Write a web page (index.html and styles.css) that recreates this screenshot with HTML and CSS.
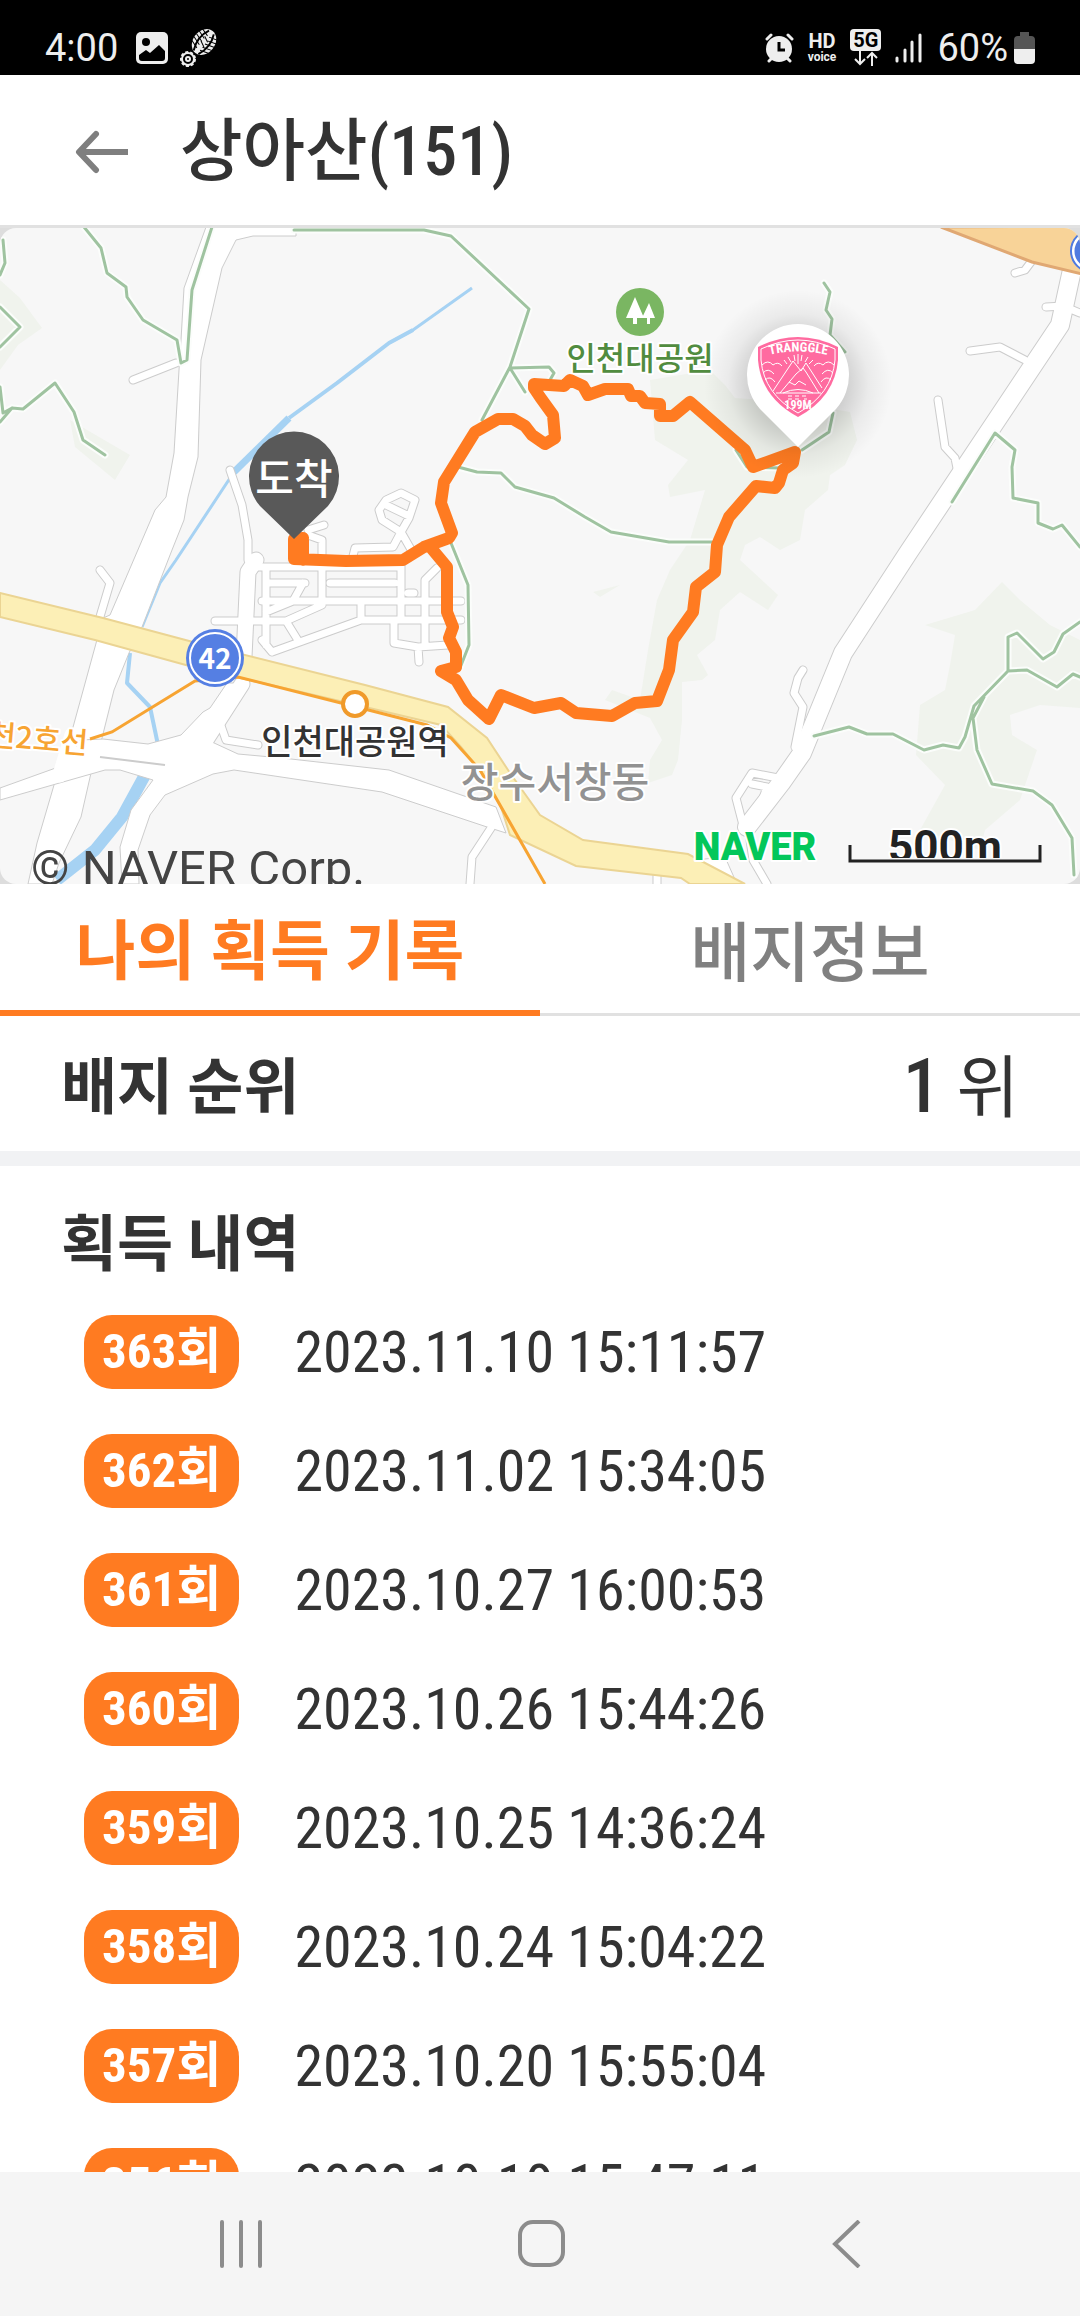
FILE: index.html
```
<!DOCTYPE html>
<html lang="ko">

<head>
    <meta charset="UTF-8">
    <meta name="viewport" content="width=device-width, initial-scale=1.0">
    <title>상아산(151)</title>
    <link rel="stylesheet" href="styles.css">
</head>

<body>
    <div class="app">
        <div class="status-bar">
            <span class="clock">4:00</span>
            <svg class="icon-photo" width="32" height="32" viewBox="0 0 32 32">
                <rect width="32" height="32" rx="5" fill="#eee" />
                <circle cx="10" cy="10" r="4" fill="#000" />
                <path d="M3 26V23L10 18L14 21L23 13L29 19V26Q29 29 26 29H6Q3 29 3 26Z" fill="#000" />
            </svg>
            <svg class="icon-shoe" width="38" height="38" viewBox="0 0 38 38">
                <g transform="rotate(38 24 13)">
                    <ellipse cx="24" cy="13" rx="11" ry="14" fill="#eee" />
                    <path d="M13 3L23 6M13 7L22 10M13 11L22 14M13 15L22 18M13 19L22 22M35 3L25 6M35 7L26 10M35 11L26 14M35 15L26 18M35 19L26 22" stroke="#000" stroke-width="1" />
                    <path d="M21 1C17 9 17 17 21 26M27 1C31 9 31 17 27 26" fill="none" stroke="#000" stroke-width="2" />
                    <path d="M21 8L27 11M21 14L27 17" stroke="#000" stroke-width="1" />
                </g>
                <circle cx="8" cy="30" r="6" fill="none" stroke="#eee" stroke-width="2" />
                <circle cx="8" cy="30" r="7" fill="none" stroke="#eee" stroke-width="2" stroke-dasharray="3 2" />
                <circle cx="8" cy="30" r="2" fill="none" stroke="#eee" stroke-width="2" />
            </svg>

            <div class="status-right">
                <svg width="29" height="30" viewBox="0 0 29 30">
                    <circle cx="14" cy="16" r="13" fill="#eee" />
                    <path d="M2 6L6 2M27 6L23 2M4 28L7 25M25 28L22 25" stroke="#eee" stroke-width="3" stroke-linecap="round" />
                    <path d="M14 9V17H20" fill="none" stroke="#000" stroke-width="3" />
                </svg>
                <span class="hd"><b>HD</b><small>voice</small></span>
                <span class="network">
                    <b>5G</b>
                    <svg width="24" height="15" viewBox="0 0 24 15">
                        <path d="M6 0V13M1 8L6 13L11 8M18 15V2M13 7L18 2L23 7" fill="none" stroke="#eee" stroke-width="2" />
                    </svg>
                </span>
                <svg class="icon-signal" width="28" height="30" viewBox="0 0 28 30">
                    <path d="M2 25V28M10 17V28M17 9V28M25 2V28" stroke="#eee" stroke-width="3" stroke-linecap="round" />
                </svg>
                <span class="battery-text">60%</span>
                <svg width="21" height="32" viewBox="0 0 21 32">
                    <path d="M6 0H15V4H17Q21 4 21 8V17H0V8Q0 4 4 4H6Z" fill="#555" />
                    <path d="M0 17H21V28Q21 32 17 32H4Q0 32 0 28Z" fill="#eee" />
                </svg>
            </div>
        </div>

        <header class="header">
            <button class="back-btn" type="button" aria-label="뒤로">
                <svg width="54" height="44" viewBox="0 0 54 44">
                    <path d="M53 22H5" fill="none" stroke="#7f7f7f" stroke-width="6" />
                    <path d="M21 4L4 22L21 40" fill="none" stroke="#7f7f7f" stroke-width="6" stroke-linecap="round" stroke-linejoin="round" />
                </svg>
            </button>
            <h1 class="title">상아산(151)</h1>
        </header>

        <div class="map">
            <svg class="map-canvas" viewBox="0 228 1080 656" preserveAspectRatio="xMidYMid slice">
                <defs>
                    <radialGradient id="shade">
                        <stop offset="50%" stop-color="#000" stop-opacity="0.16" />
                        <stop offset="75%" stop-color="#000" stop-opacity="0.05" />
                        <stop offset="100%" stop-color="#000" stop-opacity="0" />
                    </radialGradient>
                    <path id="trails" d="M84 227L101 248L107 273L126 287L127 297L143 320L177 340L181 363L187 360L192 290L212 227
                        M294 230H424L451 236L529 309L510 367L482 420M510 368L549 367L554 373L550 380M510 368L525 392
                        M458 467L477 472L501 473L515 487L554 498L585 517L611 532L669 542H712
                        M3 240L5 263L0 275M0 307L20 327L0 347M0 387L3 413L12 408L23 409L55 383L74 412L83 440L105 455M0 422L12 408
                        M451 543L468 585L469 645L460 668
                        M824 283L830 292L826 310L832 319L830 335L845 352M833 413L829 432L802 450M736 450L747 467L781 468
                        M952 502L995 433L1015 450L1012 467L1013 498L1038 503V523L1053 529L1062 525L1080 547
                        M814 736L849 727L867 734H893L924 750L943 745L959 748L965 737L974 706L1008 671V637L1017 633L1043 659L1054 652L1063 634L1080 622
                        M1008 671L1027 670L1057 687L1073 674L1080 677M984 697L973 718L977 750L992 784L1033 791L1052 805L1072 838L1074 875" />
                    <path id="streets" d="M230 470L242 505L248 540V560M133 380L176 363M100 570L110 583L99 620
                        M256 567H400M266 583H305M262 601H461M266 567V645M322 560V601M401 560V620M215 621H286M303 583L293 601L266 612
                        M272 652L361 620H461M394 622V643L418 647L448 645M418 647L419 662M437 568L425 580V643M408 593H414
                        M286 621L299 642M262 640L272 652M286 621L322 605M361 620V605M330 583H395
                        M401 493L415 500L409 518L401 532L382 520L379 510L386 500ZM386 505L409 516M401 532L413 553M401 532L393 547L355 548L352 560
                        M308 530L324 525M308 535L322 540V556
                        M220 723L226 740L258 745M491 828L472 857L470 884
                        M803 670L798 678L794 693L803 707L795 747M778 778L752 773L736 798L743 825M752 784L767 787L763 798M743 825L778 785
                        M750 840L753 860L767 884M657 873V884
                        M1015 273L1025 270L1031 262M1046 307L1063 306L1080 313M970 351L1000 347L1025 360M938 400L945 447L955 458L958 473" />
                    <path id="avenue" d="M1072 270L1060 325L908 553L843 653L802 753L781 783L747 827" />
                    <path id="lane" d="M256 560L248 572L244 657M242 684L206 740" />
                </defs>

                <rect y="228" width="1080" height="656" fill="#f7f7f7" />

                <!-- forest -->
                <g fill="#f0f3ed">
                    <path d="M650 380L710 370L725 385L735 398L790 402L850 412L857 440L845 465L830 475L828 490L805 510L800 540L780 550L760 537L745 545L740 560L778 595L768 610L740 592L720 610L715 640L697 655L708 675L702 680L682 682V720L678 760L672 775L648 783L650 760L662 740L650 718L605 700L612 690L640 700L648 650L657 600L670 570L690 540L705 490L670 497L668 485L688 460L655 440Z" />
                    <path d="M1002 582L1020 600L1050 625L1080 640V708L1040 705L1010 715L1012 735L1037 750L1020 800L985 830L980 850L920 830L945 785L916 755L920 705L945 690L950 665L955 635L925 625L975 610Z" />
                    <path d="M0 280L20 298L42 328L18 345L0 370ZM70 420L130 455L115 480L75 447ZM593 592L620 585L600 597Z" />
                </g>

                <!-- water -->
                <g fill="none" stroke="#a6d2f3" stroke-linejoin="round">
                    <path d="M472 288L413 330L389 343" stroke-width="3" />
                    <path d="M413 330L389 343L337 383L289 418" stroke-width="4" />
                    <path d="M289 418L234 472" stroke-width="7" />
                    <path d="M234 472L176 560L160 583L142 627" stroke-width="3" />
                    <path d="M130 653L127 683L150 707L158 745" stroke-width="4" />
                    <path d="M145 775L122 817L95 850L57 880" stroke-width="12" />
                </g>

                <!-- roads -->
                <g class="casing">
                    <use href="#streets" class="street" />
                    <use href="#lane" class="lane" />
                    <use href="#avenue" class="avenue" />
                </g>
                <g fill="#fff" stroke="#ccc" stroke-width="1">
                    <path d="M206 227L184 288L181 340L179 370L174 453L166 497L155 510L110 615L103 618L95 647L64 760L59 768L37 843L28 884H52L59 863L81 817L91 773L102 738L114 690L129 653L142 627L172 550L184 520L188 497L198 457L201 360L222 268L236 240L253 236H296V227Z" />
                    <path d="M0 788L64 765L80 740L103 739L148 744L181 735L203 712L210 708L227 683H246L222 720L211 735L212 742L238 754L282 758L389 770L496 807L506 833L487 827L382 792L234 770L213 774L165 795L150 815L138 850L139 884H122L120 847L131 810L153 780L120 770H105L0 800Z" />
                    <path d="M695 860L725 857L737 884H735Z" />
                </g>
                <g class="surface">
                    <use href="#streets" class="street" />
                    <use href="#lane" class="lane" />
                    <use href="#avenue" class="avenue" />
                    <path d="M72 735L60 775" class="lane" />
                </g>
                <path d="M100 757L165 765" stroke="#ccc" stroke-width="2" />

                <!-- trails with a pale halo -->
                <use href="#trails" class="trail-halo" />
                <use href="#trails" class="trail" />

                <path d="M0 593L103 618L193 642L365 685L448 707L487 738L510 773L540 815L583 840L688 854L745 884H690L681 878L576 866L510 835L501 807L482 773L461 747L441 725L344 702L193 667L95 640L0 617Z" fill="#fcefb6" stroke="#ebd493" stroke-width="2" />
                <path d="M941 227L1032 262L1082 274V226Z" fill="#f8d398" stroke="#e0a873" stroke-width="3" />
                <circle cx="1092" cy="251" r="19" fill="#4f7be0" stroke="#fff" stroke-width="3" />
                <circle cx="1092" cy="251" r="21" fill="none" stroke="#4f7be0" stroke-width="2" />

                <!-- subway line 2 -->
                <path d="M90 739L112 732L195 681L238 677L341 703L427 725L451 738L480 770L545 884" fill="none" stroke="#f7a432" stroke-width="3" />
                <circle cx="355" cy="704" r="12" fill="#fff" stroke="#f09a2a" stroke-width="4" />

                <circle cx="215" cy="658" r="29" fill="#557fe3" />
                <circle cx="215" cy="658" r="25" fill="none" stroke="#fff" stroke-width="2" />
                <text class="map-road" x="215" y="669">42</text>

                <circle cx="640" cy="312" r="24" fill="#7ab662" />
                <path d="M635 297L644 318H637V324H633V318H626ZM649 303L655 318H650V324H647V318H642Z" fill="#fff" />

                <text class="map-park" x="640" y="370">인천대공원</text>
                <text class="map-station" x="355" y="754">인천대공원역</text>
                <text class="map-line" x="-13" y="754" transform="rotate(5 86 754)">천2호선</text>
                <text class="map-town" x="555" y="797">장수서창동</text>

                <!-- walked course -->
                <path class="course" d="M303 540V560M303 538L294 539V559L320 560L346 561L403 560L424 547L449 538L452 533L441 503L444 482L475 432L498 419H513L525 426L532 435L545 444L555 438L553 415L540 397L534 388V384L564 386L570 380L583 386L588 395L605 389H628L631 396H640L645 403L660 404V416H673L690 402L745 450L753 467L795 452L793 463L783 470L779 483L775 488L756 486L729 517L717 545L715 572L696 587L693 612L673 640L669 670L657 701L635 703L612 716L576 713L561 703L534 708L501 695L489 719L468 700L456 680L441 671L456 667V652L449 638L453 627L447 612V567L432 549" />

                <!-- arrival pin -->
                <path d="M294 539L260 506A45 45 0 1 1 328 506Z" fill="#595959" />
                <text class="map-arrival" x="294" y="494">도착</text>

                <!-- badge pin -->
                <circle cx="798" cy="384" r="94" fill="url(#shade)" />
                <path d="M798 447L760 409A51 51 0 1 1 836 409Z" fill="#fff" />
                <path d="M758 347Q778 337 798 337Q818 337 838 347V360Q835 397 798 417Q761 397 758 360Z" fill="#ff6ba0" />
                <g fill="none" stroke="#fff" stroke-width="1">
                    <path d="M761 349Q780 340 798 340Q816 340 835 349V360Q832 394 798 413Q764 394 761 360Z" />
                    <path d="M773 391L793 361L801 371M780 393L796 374L803 368L806 372L819 393M801 371L806 363L822 388M789 382L795 385L799 381L806 385M776 393H821M783 393Q798 386 813 393" />
                    <path d="M762 365Q768 359 773 365Q778 361 782 366M763 373Q768 367 774 374M765 380Q770 375 775 382M834 365Q828 359 823 365Q818 361 814 366M833 373Q828 367 822 374M831 380Q826 375 821 382" />
                    <path d="M798 354V364M794 355L795 361M802 355L801 361M788 357L791 362M808 357L805 362M784 360L787 364M813 360L809 364" />
                    <path d="M788 396H792M788 399H792M795 396H799M795 399H799M802 396H806M804 399H807" />
                </g>
                <path id="arc" d="M762 357Q798 346 835 357" fill="none" />
                <text class="badge-name"><textPath href="#arc" startOffset="50%">TRANGGLE</textPath></text>
                <text class="badge-height" x="798" y="409">199M</text>

                <!-- scale bar -->
                <text class="map-scale" x="945" y="862">500m</text>
                <rect x="850" y="858" width="191" height="26" fill="#f7f7f7" />
                <path d="M850 845V861H1040V845" fill="none" stroke="#222" stroke-width="3" />
                <text class="map-naver" x="755" y="860">NAVER</text>
                <text class="map-copyright" x="31" y="885">© NAVER Corp.</text>
            </svg>
        </div>

        <div class="tabs">
            <button class="tab active" type="button">나의 획득 기록</button>
            <button class="tab" type="button">배지정보</button>
        </div>

        <div class="rank">
            <h2>배지 순위</h2>
            <p class="rank-value"><b>1</b> 위</p>
        </div>

        <div class="history">
            <h2>획득 내역</h2>
            <ul class="history-list">
                <li><span class="count">363회</span><time>2023.11.10 15:11:57</time></li>
                <li><span class="count">362회</span><time>2023.11.02 15:34:05</time></li>
                <li><span class="count">361회</span><time>2023.10.27 16:00:53</time></li>
                <li><span class="count">360회</span><time>2023.10.26 15:44:26</time></li>
                <li><span class="count">359회</span><time>2023.10.25 14:36:24</time></li>
                <li><span class="count">358회</span><time>2023.10.24 15:04:22</time></li>
                <li><span class="count">357회</span><time>2023.10.20 15:55:04</time></li>
                <li><span class="count">356회</span><time>2023.10.19 15:47:11</time></li>
            </ul>
        </div>

        <nav class="nav-bar">
            <button type="button" aria-label="최근 앱">
                <svg width="48" height="48" viewBox="0 0 48 48">
                    <path d="M5 2V46M24 2V46M43 2V46" stroke="#8c8c8c" stroke-width="4" stroke-linecap="round" />
                </svg>
            </button>
            <button type="button" aria-label="홈">
                <svg width="48" height="48" viewBox="0 0 48 48">
                    <rect x="3" y="2" width="43" height="43" rx="13" fill="none" stroke="#8c8c8c" stroke-width="4" />
                </svg>
            </button>
            <button type="button" aria-label="뒤로">
                <svg width="48" height="48" viewBox="0 0 48 48">
                    <path d="M42 1L18 24L42 47" fill="none" stroke="#8c8c8c" stroke-width="4" />
                </svg>
            </button>
        </nav>
    </div>
</body>

</html>
```
FILE: styles.css
```
* {
    box-sizing: border-box;
}

body {
    margin: 0;
    font-family: "Roboto Condensed", "Noto Sans CJK KR", sans-serif;
    color: #333;
    background: #fff;
}

button {
    border: none;
    padding: 0;
    background: none;
    font-family: inherit;
    cursor: pointer;
}

svg {
    display: block;
}

h1,
h2,
p {
    margin: 0;
}

.app {
    display: flex;
    flex-direction: column;
    height: 100vh;
    overflow: hidden;
}

/* status bar */
.status-bar {
    display: flex;
    align-items: center;
    flex-shrink: 0;
    height: 75px;
    padding: 20px 45px 0;
    background: #000;
    color: #eee;
    font-family: Roboto, sans-serif;
    font-size: 38px;
}

.icon-photo {
    margin: 0 12px 0 18px;
}

.status-right {
    display: flex;
    align-items: center;
    gap: 14px;
    margin-left: auto;
}

.hd,
.network {
    display: flex;
    flex-direction: column;
    align-items: center;
}

.hd b {
    font-size: 20px;
    line-height: 18px;
}

.hd small {
    font-size: 12px;
    font-weight: bold;
    line-height: 14px;
}

.network b {
    padding: 0 3px;
    border-radius: 4px;
    background: #eee;
    color: #000;
    font-size: 20px;
    line-height: 22px;
}

.battery-text {
    margin-right: -8px;
}

/* header */
.header {
    display: flex;
    align-items: center;
    flex-shrink: 0;
    gap: 51px;
    height: 153px;
    padding: 4px 75px 0;
    border-bottom: 3px solid #e1e1e1;
}

.title {
    font-size: 68px;
    font-weight: 500;
    line-height: 90px;
}

/* map */
.map {
    flex-shrink: 0;
    background: #ddd;
}

.map-canvas {
    width: 100%;
    border-radius: 16px;
}

.street,
.lane,
.avenue,
.trail,
.trail-halo,
.course {
    fill: none;
    stroke-linecap: round;
    stroke-linejoin: round;
}

.casing {
    stroke: #ccc;
}

.casing .street {
    stroke-width: 9px;
}

.casing .lane {
    stroke-width: 17px;
}

.casing .avenue {
    stroke-width: 20px;
}

.surface {
    stroke: #fff;
}

.surface .street {
    stroke-width: 7px;
}

.surface .lane {
    stroke-width: 15px;
}

.surface .avenue {
    stroke-width: 18px;
}

.trail-halo {
    stroke: #fbfdfb;
    stroke-width: 7px;
}

.trail {
    stroke: #9fc3a0;
    stroke-width: 3px;
}

.course {
    stroke: #ff7b21;
    stroke-width: 12px;
}

.map text {
    font-family: "Noto Sans CJK KR", sans-serif;
    text-anchor: middle;
    paint-order: stroke;
    stroke: #fff;
    stroke-width: 4px;
    stroke-linejoin: round;
}

.map .map-road {
    font-size: 28px;
    font-weight: bold;
    fill: #fff;
    stroke: none;
}

.map .map-park {
    font-size: 32px;
    font-weight: 500;
    fill: #518c3f;
}

.map .map-station {
    font-size: 34px;
    font-weight: 500;
    fill: #333;
}

.map .map-line {
    font-size: 30px;
    font-weight: 500;
    fill: #f7a432;
    text-anchor: start;
}

.map .map-town {
    font-size: 41px;
    font-weight: 500;
    fill: #929292;
}

.map .map-arrival {
    font-size: 42px;
    font-weight: 500;
    fill: #fff;
    stroke: none;
}

.map .badge-name,
.map .badge-height {
    font-family: "Roboto Condensed", sans-serif;
    font-size: 12px;
    font-weight: bold;
    fill: #fff;
    stroke: none;
}

.map .badge-name {
    font-size: 13px;
}

.map .map-scale {
    font-family: Roboto, sans-serif;
    font-size: 44px;
    font-weight: bold;
    fill: #222;
}

.map .map-naver {
    font-family: Roboto, sans-serif;
    font-size: 38px;
    font-weight: 900;
    fill: #03c75a;
}

.map .map-copyright {
    font-family: Roboto, sans-serif;
    font-size: 49px;
    fill: #444;
    stroke: none;
    text-anchor: start;
}

/* tabs */
.tabs {
    display: grid;
    grid-template-columns: 1fr 1fr;
    flex-shrink: 0;
    height: 132px;
}

.tab {
    padding-top: 10px;
    border-bottom: 3px solid #e1e1e1;
    color: #808080;
    font-size: 65px;
    font-weight: 500;
    line-height: 90px;
}

.tab.active {
    border-bottom: 6px solid #ff7b21;
    color: #ff7b21;
    font-weight: 700;
}

/* rank */
.rank {
    display: flex;
    align-items: center;
    justify-content: space-between;
    flex-shrink: 0;
    height: 150px;
    padding: 8px 61px 0;
    border-bottom: 15px solid #f1f2f4;
}

h2 {
    font-size: 61px;
    font-weight: 700;
    line-height: 90px;
}

.rank-value {
    font-size: 68px;
    line-height: 90px;
}

.rank-value b {
    font-size: 76px;
    font-weight: 500;
}

/* history */
.history {
    flex: 1;
    min-height: 0;
    padding: 34px 61px 0;
    overflow: hidden;
}

.history-list {
    display: flex;
    flex-direction: column;
    gap: 45px;
    margin: 0;
    padding: 25px 23px 0;
    list-style: none;
}

.history-list li {
    display: flex;
    align-items: center;
    gap: 55px;
}

.count {
    padding: 0 18px;
    border-radius: 28px;
    background: #ff7b21;
    color: #fff;
    font-size: 49px;
    font-weight: 700;
    line-height: 74px;
}

.history-list time {
    font-size: 58px;
    line-height: 74px;
}

/* navigation bar */
.nav-bar {
    display: grid;
    grid-template-columns: repeat(3, 1fr);
    flex-shrink: 0;
    height: 144px;
    padding: 0 89px 0 91px;
    background: #f5f5f5;
}

.nav-bar button {
    display: flex;
    align-items: center;
    justify-content: center;
}
```
